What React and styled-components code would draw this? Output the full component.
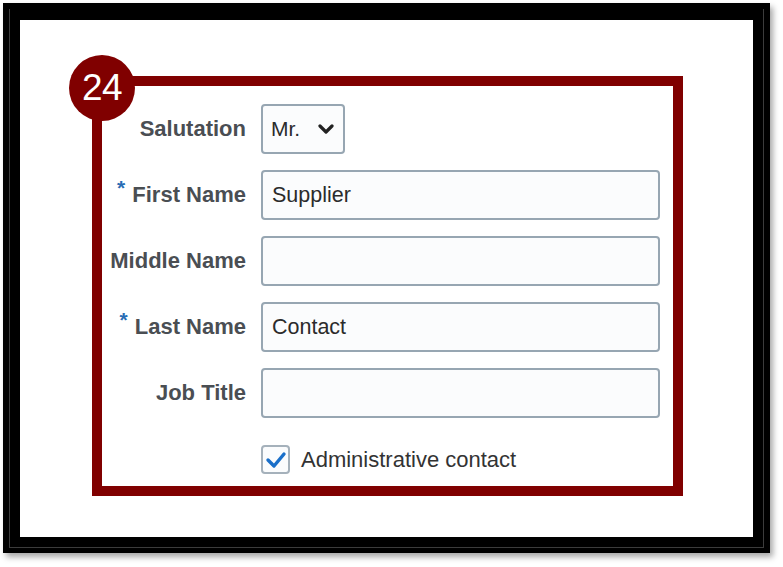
import React from "react";
import styled, { createGlobalStyle } from "styled-components";

const GlobalStyle = createGlobalStyle`
  body {
    margin: 0;
    background: #ffffff;
    font-family: "Liberation Sans", Arial, sans-serif;
  }
`;

const fields = [
  { label: "First Name", value: "Supplier", required: true },
  { label: "Middle Name", value: "" },
  { label: "Last Name", value: "Contact", required: true },
  { label: "Job Title", value: "" },
];

const App = () => {
  return (
    <Page>
      <GlobalStyle />
      <Frame>
        <FrameInner>
          <Sheet>
            <Callout>
              <Badge>24</Badge>
              <Form>
                <Label>Salutation</Label>
                <SelectBox>
                  <span>Mr.</span>
                  <svg width="16" height="12" viewBox="0 0 16 12">
                    <polyline
                      points="2,3 8,9 14,3"
                      fill="none"
                      stroke="#222"
                      strokeWidth="3.2"
                      strokeLinecap="round"
                      strokeLinejoin="round"
                    />
                  </svg>
                </SelectBox>
                {fields.map((f) => (
                  <React.Fragment key={f.label}>
                    <Label>
                      {f.required && <Star>*</Star>}
                      {f.label}
                    </Label>
                    <Input defaultValue={f.value} />
                  </React.Fragment>
                ))}
                <span />
                <CheckRow>
                  <CheckBox>
                    <svg width="22" height="20" viewBox="0 0 22 20">
                      <polyline
                        points="3,10 9,16 19,4"
                        fill="none"
                        stroke="#1a6fc9"
                        strokeWidth="3.4"
                        strokeLinecap="round"
                        strokeLinejoin="round"
                      />
                    </svg>
                  </CheckBox>
                  <CheckLabel>Administrative contact</CheckLabel>
                </CheckRow>
              </Form>
            </Callout>
          </Sheet>
        </FrameInner>
      </Frame>
    </Page>
  );
};

export default App;

const Page = styled.div`
  width: 783px;
  height: 567px;
  padding: 3px;
  box-sizing: border-box;
`;

const Frame = styled.div`
  width: 767px;
  height: 550px;
  box-sizing: border-box;
  background: #000;
  padding: 6px 6px 5px 6px;
  box-shadow: 3px 4px 6px rgba(0, 0, 0, 0.35);
`;

const FrameInner = styled.div`
  height: 100%;
  box-sizing: border-box;
  border: 1px solid #3c3c3c;
  border-top: none;
  padding: 11px 10px 10px 10px;
`;

const Sheet = styled.div`
  height: 100%;
  background: #fff;
  padding: 56px 0 0 72px;
  box-sizing: border-box;
`;

const Callout = styled.div`
  position: relative;
  width: 591px;
  height: 420px;
  box-sizing: border-box;
  border: 10px solid #800000;
  padding: 18px 13px 0 0;
`;

const Badge = styled.div`
  position: absolute;
  left: -33px;
  top: -31px;
  width: 66px;
  height: 66px;
  border-radius: 50%;
  background: #800000;
  color: #fff;
  font-size: 37px;
  line-height: 66px;
  text-align: center;
  letter-spacing: -0.5px;
`;

const Form = styled.div`
  display: grid;
  grid-template-columns: 144px 1fr;
  column-gap: 15px;
  row-gap: 16px;
  align-items: center;
`;

const Label = styled.div`
  text-align: right;
  font-weight: bold;
  font-size: 22px;
  color: #4a4e53;
  white-space: nowrap;
`;

const Star = styled.span`
  color: #2a6db4;
  font-size: 21px;
  position: relative;
  top: -7px;
  margin-right: 7px;
`;

const SelectBox = styled.div`
  width: 84px;
  height: 50px;
  box-sizing: border-box;
  border: 2px solid #97a6b2;
  border-radius: 4px;
  background: #fbfcfd;
  display: flex;
  align-items: center;
  justify-content: space-between;
  padding: 0 9px 0 8px;
  font-size: 21px;
  color: #2b2b2b;
`;

const Input = styled.input`
  width: 399px;
  height: 50px;
  box-sizing: border-box;
  border: 2px solid #97a6b2;
  border-radius: 4px;
  background: #fbfcfd;
  padding: 0 9px;
  font-family: "Liberation Sans", Arial, sans-serif;
  font-size: 21.5px;
  color: #2b2b2b;
  outline: none;
`;

const CheckRow = styled.div`
  display: flex;
  align-items: center;
  gap: 11px;
  margin-top: 11px;
`;

const CheckBox = styled.span`
  width: 29px;
  height: 29px;
  box-sizing: border-box;
  border: 2px solid #a5b1bb;
  border-radius: 4px;
  background: #fbfcfd;
  display: flex;
  align-items: center;
  justify-content: center;
`;

const CheckLabel = styled.span`
  font-size: 22px;
  color: #333;
`;
